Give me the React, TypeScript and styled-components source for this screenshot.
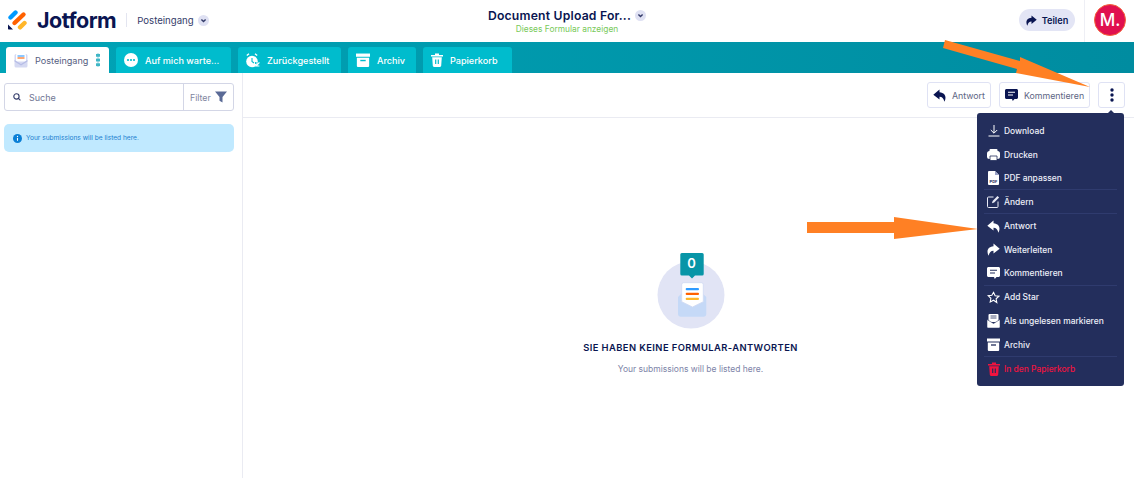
import React from 'react';
import styled, { createGlobalStyle } from 'styled-components';

const GlobalStyle = createGlobalStyle`
  html, body { margin: 0; padding: 0; background: #fff; }
  body { font-family: 'Inter', 'Liberation Sans', sans-serif; color: #0a1551; overflow: hidden; }
  * { box-sizing: border-box; }
`;

const Page = styled.div`
  position: relative;
  width: 1134px;
  height: 478px;
  display: flex;
  flex-direction: column;
  overflow: hidden;
`;

const Header = styled.header`
  height: 42px;
  display: grid;
  grid-template-columns: 1fr auto 1fr;
  align-items: center;
  padding: 0 8px 2px;
`;

const Brand = styled.div`
  display: flex;
  align-items: center;
`;

const Wordmark = styled.span`
  margin-left: 10px;
  font-size: 21.5px;
  font-weight: 700;
  letter-spacing: -0.5px;
  color: #0a1551;
`;

const BrandDivider = styled.span`
  width: 1px;
  height: 14px;
  margin: 0 10px 0 10px;
  background: #e3e5f0;
`;

const BrandSection = styled.span`
  font-size: 9.6px;
  color: #343c6a;
`;

const Chevron = styled.span`
  width: 11px;
  height: 11px;
  margin-left: 4px;
  border-radius: 50%;
  background: #dfe1f3;
  display: inline-flex;
  align-items: center;
  justify-content: center;
`;

const FormTitleBlock = styled.div`
  display: flex;
  flex-direction: column;
  align-items: center;
`;

const FormTitleRow = styled.div`
  display: flex;
  align-items: center;
`;

const FormTitle = styled.span`
  font-size: 12.2px;
  font-weight: 600;
  line-height: 18px;
  letter-spacing: 0.2px;
  color: #0a1551;
`;

const FormLink = styled.span`
  font-size: 8.4px;
  line-height: 9px;
  color: #78c95a;
`;

const HeaderRight = styled.div`
  display: flex;
  align-items: center;
  justify-content: flex-end;
`;

const ShareButton = styled.div`
  width: 56px;
  height: 22px;
  border-radius: 11px;
  background: #e3e5f5;
  display: flex;
  align-items: center;
  justify-content: center;
  gap: 5px;
  font-size: 9.2px;
  font-weight: 600;
  color: #0a1551;
`;

const HeaderDivider = styled.span`
  width: 1px;
  height: 42px;
  margin: 0 9px -2px 9px;
  background: #eeeff5;
`;

const Avatar = styled.div`
  width: 32px;
  height: 32px;
  border-radius: 50%;
  background: #e0104f;
  border: 1px solid #f5623a;
  color: #fff;
  font-size: 17px;
  font-weight: 500;
  display: flex;
  align-items: center;
  justify-content: center;
`;

const TabBar = styled.nav`
  height: 31px;
  padding: 5px 0 0 6px;
  display: flex;
  gap: 7px;
  background: linear-gradient(90deg, #00a4b7, #008ca0);
`;

const Tab = styled.div<{ $active?: boolean; $width: number }>`
  width: ${p => p.$width}px;
  height: 26px;
  padding-left: 8px;
  display: flex;
  align-items: center;
  gap: 7px;
  border-radius: 3px 3px 0 0;
  background: ${p => (p.$active ? '#fff' : '#00bccd')};
  color: ${p => (p.$active ? '#56607f' : '#fff')};
  font-size: 9.1px;
  font-weight: ${p => (p.$active ? 400 : 500)};
`;

const TabDots = styled.span`
  margin-left: auto;
  margin-right: 9px;
  width: 4px;
  height: 14px;
  background: radial-gradient(circle, #3fb6c6 1.8px, transparent 2px) 0 0 / 4px 4.7px;
`;

const Main = styled.main`
  flex: 1;
  display: flex;
  min-height: 0;
`;

const Sidebar = styled.aside`
  width: 243px;
  padding: 10px 8px 0 4px;
  border-right: 1px solid #eaebf2;
  display: flex;
  flex-direction: column;
  gap: 13px;
`;

const SearchBox = styled.div`
  height: 28px;
  display: flex;
  align-items: center;
  border: 1px solid #d3d6e6;
  border-radius: 3px;
`;

const SearchField = styled.div`
  flex: 1;
  height: 100%;
  padding-left: 8px;
  display: flex;
  align-items: center;
  gap: 8px;
  font-size: 9px;
  color: #6f7693;
`;

const FilterButton = styled.div`
  width: 50px;
  height: 100%;
  border-left: 1px solid #d3d6e6;
  padding-left: 6px;
  display: flex;
  align-items: center;
  gap: 4px;
  font-size: 8.8px;
  color: #7f86a0;
`;

const InfoBanner = styled.div`
  height: 28px;
  padding-left: 9px;
  display: flex;
  align-items: center;
  gap: 4px;
  border-radius: 5px;
  background: #c0e9ff;
  color: #1b7fd0;
  font-size: 6.6px;
`;

const Content = styled.section`
  flex: 1;
  display: flex;
  flex-direction: column;
`;

const Toolbar = styled.div`
  height: 45px;
  padding: 9px 9px 0 0;
  display: flex;
  justify-content: flex-end;
  gap: 8px;
  border-bottom: 1px solid #eaebf2;
`;

const ToolButton = styled.div<{ $width: number }>`
  width: ${p => p.$width}px;
  height: 26px;
  border: 1px solid #dfe2f4;
  border-radius: 3px;
  display: flex;
  align-items: center;
  justify-content: center;
  gap: 6px;
  font-size: 8.8px;
  color: #5d6584;
`;

const EmptyState = styled.div`
  flex: 1;
  display: flex;
  flex-direction: column;
  align-items: center;
  padding: 135px 0 0 4px;
`;

const IllustrationWrap = styled.div`
  position: relative;
  width: 68px;
  height: 76px;
`;

const BadgeZero = styled.span`
  position: absolute;
  left: 23px;
  width: 24px;
  top: 2px;
  text-align: center;
  font-size: 13px;
  line-height: 17px;
  font-weight: 600;
  color: #fff;
`;

const EmptyTitle = styled.h2`
  margin: 12px 0 0;
  font-size: 9.4px;
  line-height: 14px;
  font-weight: 600;
  letter-spacing: 0.42px;
  color: #0a1551;
`;

const EmptyText = styled.p`
  margin: 8px 0 0;
  font-size: 8.5px;
  line-height: 12px;
  color: #7d84a8;
`;

const Menu = styled.div`
  position: absolute;
  left: 977px;
  top: 113px;
  width: 147px;
  height: 273px;
  padding: 6px 7px 0 7px;
  background: #232e5c;
  border-radius: 3px;
  display: flex;
  flex-direction: column;
  &::before {
    content: '';
    position: absolute;
    top: -3px;
    right: 9px;
    border: 4px solid transparent;
    border-top: 0;
    border-bottom-color: #232e5c;
  }
`;

const MenuRow = styled.div<{ $danger?: boolean; $divider?: boolean }>`
  height: 23.8px;
  flex: none;
  padding-left: 3px;
  display: flex;
  align-items: center;
  gap: 4px;
  font-size: 8.45px;
  font-weight: 500;
  color: ${p => (p.$danger ? '#f0133f' : '#eef0f9')};
  border-bottom: ${p => (p.$divider ? '1px solid #2f3b6e' : '0 none')};
`;

const MenuIcon = styled.span`
  width: 13px;
  height: 14px;
  display: flex;
  align-items: center;
  justify-content: center;
`;

const ArrowLayer = styled.svg`
  position: absolute;
  left: 0;
  top: 0;
  pointer-events: none;
`;

const ChevronIcon = () => (
  <svg width="7" height="7" viewBox="0 0 10 10" fill="none" stroke="#343c6a" strokeWidth="2">
    <path d="M2 3.500l3 3 3-3" />
  </svg>
);

const LogoIcon = () => (
  <svg width="19" height="20" viewBox="0 0 19 20" fill="none" strokeWidth="4.400" strokeLinecap="round">
    <path d="M2.500 7.500L7.500 2.500" stroke="#0099ff" />
    <path d="M6.500 13L15.500 4.500" stroke="#ff6100" />
    <path d="M12 17.300L16.500 13" stroke="#ffb629" />
    <path d="M0 14.500v4.300c0 .4.200.7.700.7H5z" fill="#0a1551" stroke="none" />
  </svg>
);

const ReplyIcon = ({ color }: { color: string }) => (
  <svg width="13" height="13" viewBox="0 0 12 12" fill={color}>
    <path d="M6 .5L.3 5.200 6 9.800V7.200c2.500 0 3.700 1.500 4.500 4.500 2-3.500 1.400-8.200-4.500-8.700z" />
  </svg>
);

const ForwardIcon = ({ color, size = 13 }: { color: string; size?: number }) => (
  <svg width={size} height={size} viewBox="0 0 12 12" fill={color}>
    <path d="M6 .5l5.700 4.700L6 9.800V7.200c-2.500 0-3.700 1.500-4.500 4.500C-.5 8.200.1 3.500 6 3z" />
  </svg>
);

const CommentIcon = ({ color, line }: { color: string; line: string }) => (
  <svg width="13" height="12" viewBox="0 0 13 12">
    <path d="M1.500 0h10c.8 0 1.500.7 1.500 1.500v7c0 .8-.7 1.500-1.500 1.500H9.500L7.800 12 7 10H1.500C.7 10 0 9.300 0 8.500v-7C0 .7.700 0 1.500 0z" fill={color} />
    <path d="M3 3.200h7M3 6h5" stroke={line} strokeWidth="1.100" />
  </svg>
);

const ArchiveIcon = ({ color, bg, size = 13 }: { color: string; bg: string; size?: number }) => (
  <svg width={size} height={size} viewBox="0 0 13 13">
    <path d="M0 .5h13v3H0z" fill={color} />
    <path d="M.8 4.500h11.400V12a1 1 0 0 1-1 1H1.800a1 1 0 0 1-1-1z" fill={color} />
    <path d="M4 7h5" stroke={bg} strokeWidth="1.300" />
  </svg>
);

const TrashIcon = ({ color, bg }: { color: string; bg: string }) => (
  <svg width="12" height="14" viewBox="0 0 12 14">
    <path d="M0 2h12v1.400H0zM4 .5h4V2H4z" fill={color} />
    <path d="M1.200 4.200h9.600l-.6 8.600a1.200 1.200 0 0 1-1.200 1.100H3a1.200 1.200 0 0 1-1.200-1.100z" fill={color} />
    <path d="M4.700 6.500v4.500M7.300 6.500v4.500" stroke={bg} strokeWidth="1.200" />
  </svg>
);

const InboxIcon = () => (
  <svg width="14" height="15" viewBox="0 0 14 15">
    <rect x="0.500" y="1" width="13" height="13.500" rx="1.500" fill="#d5d9f2" />
    <rect x="2" y="1" width="10" height="7.500" rx="1" fill="#fff" />
    <path d="M3.500 3h7" stroke="#2f9bff" strokeWidth="1.100" />
    <path d="M3.500 5h7" stroke="#ff6100" strokeWidth="1.100" />
    <path d="M0.500 7l6.500 4 6.500-4v1.500L7 12.500.5 8.500z" fill="#b7bde6" />
  </svg>
);

const WaitingIcon = () => (
  <svg width="14" height="14" viewBox="0 0 14 14">
    <circle cx="7" cy="7" r="7" fill="#fff" />
    <circle cx="4" cy="7" r="1.100" fill="#00bccd" />
    <circle cx="7" cy="7" r="1.100" fill="#00bccd" />
    <circle cx="10" cy="7" r="1.100" fill="#00bccd" />
  </svg>
);

const SnoozeIcon = () => (
  <svg width="14" height="15" viewBox="0 0 14 15">
    <circle cx="6" cy="8.500" r="5.800" fill="#fff" />
    <path d="M.8 2.500L3 .8M9 .8l2.200 1.700" stroke="#fff" strokeWidth="1.400" />
    <path d="M6 5v3.500l2 1.500" stroke="#00bccd" strokeWidth="1.100" fill="none" />
    <path d="M9 9h4.500v1.500l-3 2.500h3V15H9v-1.500l3-2.500H9z" fill="#00bccd" />
    <path d="M9.800 10h3.200l-3 3h3.400" stroke="#fff" strokeWidth="1.100" fill="none" />
  </svg>
);

const SearchIcon = () => (
  <svg width="8" height="8" viewBox="0 0 10 10" fill="none" stroke="#343c6a" strokeWidth="1.400">
    <circle cx="4.300" cy="4.300" r="3.300" />
    <path d="M6.800 6.800L9.300 9.300" />
  </svg>
);

const FilterIcon = () => (
  <svg width="12" height="12" viewBox="0 0 12 12" fill="#5a6a96">
    <path d="M0 .5h12L7.500 6v5.500l-3-1.800V6z" />
  </svg>
);

const InfoIcon = () => (
  <svg width="9" height="9" viewBox="0 0 10 10">
    <circle cx="5" cy="5" r="5" fill="#0a7fd6" />
    <path d="M5 4.300v3.200" stroke="#fff" strokeWidth="1.200" />
    <circle cx="5" cy="2.700" r="0.700" fill="#fff" />
  </svg>
);

const KebabIcon = () => (
  <svg width="4" height="14" viewBox="0 0 4 14" fill="#0a1551">
    <circle cx="2" cy="2" r="1.700" />
    <circle cx="2" cy="7" r="1.700" />
    <circle cx="2" cy="12" r="1.700" />
  </svg>
);

const DownloadIcon = () => (
  <svg width="12" height="12" viewBox="0 0 12 12" fill="none" stroke="#fff" strokeWidth="1">
    <path d="M6 0v8M2.800 5L6 8.200 9.200 5M.5 11h11" />
  </svg>
);

const PrintIcon = () => (
  <svg width="13" height="12" viewBox="0 0 13 12">
    <rect x="2.500" y="0" width="8" height="3" rx="1" fill="#fff" />
    <rect x="0" y="2" width="13" height="8" rx="2.500" fill="#fff" />
    <path d="M3 7h7v4.500H3z" fill="#fff" stroke="#232e5c" strokeWidth="0.800" />
  </svg>
);

const PdfIcon = () => (
  <svg width="11" height="14" viewBox="0 0 11 14">
    <path d="M1 0h6l4 4v9a1 1 0 0 1-1 1H1a1 1 0 0 1-1-1V1a1 1 0 0 1 1-1z" fill="#fff" />
    <path d="M7 0v4h4" fill="#9aa2c8" />
    <text x="5.500" y="11.500" textAnchor="middle" fontSize="4" fontWeight="700" fill="#232e5c">PDF</text>
  </svg>
);

const EditIcon = () => (
  <svg width="13" height="13" viewBox="0 0 13 13" fill="none" stroke="#e9ebf6" strokeWidth="1">
    <path d="M6.500 2H1.500a1 1 0 0 0-1 1v8.500a1 1 0 0 0 1 1H10a1 1 0 0 0 1-1V6.500" />
    <path d="M5 8.200l.6-2.200L10.500 1l1.600 1.600L7.200 7.600z" fill="#e9ebf6" stroke="none" />
  </svg>
);

const StarIcon = () => (
  <svg width="13" height="13" viewBox="0 0 24 24" fill="none" stroke="#fff" strokeWidth="2">
    <path d="M12 2.500l3 6.300 6.800.9-5 4.700 1.300 6.800L12 17l-6.100 3.200 1.300-6.800-5-4.700 6.800-.9z" />
  </svg>
);

const UnreadIcon = () => (
  <svg width="13" height="14" viewBox="0 0 13 14">
    <rect x="1.500" y="0" width="10" height="8" rx="1" fill="#fff" />
    <path d="M3.500 2h6M3.500 4h6" stroke="#232e5c" strokeWidth="0.800" />
    <path d="M0 5.500l6.500 4 6.500-4V13a1 1 0 0 1-1 1H1a1 1 0 0 1-1-1z" fill="#fff" stroke="#232e5c" strokeWidth="0.500" />
  </svg>
);

const EmptyIllustration = () => (
  <svg width="68" height="76" viewBox="0 0 68 76">
    <circle cx="34" cy="42" r="33.500" fill="#e1e4f5" />
    <path d="M21 44l4-4h20l4.300 4v16.700a3 3 0 0 1-3 3H24a3 3 0 0 1-3-3z" fill="#c5d9f7" />
    <path d="M26.700 29.700h17.600a2 2 0 0 1 2 2v17L35.500 54l-10.800-5.300v-17a2 2 0 0 1 2-2z" fill="#fff" stroke="#cfd9f2" strokeWidth="0.800" />
    <rect x="28.700" y="35" width="13.300" height="2.200" rx="1" fill="#2f9bff" />
    <rect x="28.700" y="39.700" width="13.300" height="2.200" rx="1" fill="#ff6100" />
    <rect x="28.700" y="44.700" width="13.300" height="2.200" rx="1" fill="#ffb629" />
    <path d="M24.800 0h20.400a1.500 1.500 0 0 1 1.500 1.500v19.500a1.500 1.500 0 0 1-1.500 1.500h-7.200L35 25.500l-3-3h-7.200a1.500 1.500 0 0 1-1.500-1.500V1.500A1.500 1.500 0 0 1 24.800 0z" fill="#0795a7" />
  </svg>
);

const menuItems: { label: string; icon: React.ReactNode; divider?: boolean; danger?: boolean }[] = [
  { label: 'Download', icon: <DownloadIcon /> },
  { label: 'Drucken', icon: <PrintIcon /> },
  { label: 'PDF anpassen', icon: <PdfIcon />, divider: true },
  { label: 'Ändern', icon: <EditIcon />, divider: true },
  { label: 'Antwort', icon: <ReplyIcon color="#fff" /> },
  { label: 'Weiterleiten', icon: <ForwardIcon color="#fff" /> },
  { label: 'Kommentieren', icon: <CommentIcon color="#fff" line="#232e5c" />, divider: true },
  { label: 'Add Star', icon: <StarIcon /> },
  { label: 'Als ungelesen markieren', icon: <UnreadIcon /> },
  { label: 'Archiv', icon: <ArchiveIcon color="#fff" bg="#232e5c" />, divider: true },
  { label: 'In den Papierkorb', icon: <TrashIcon color="#f0133f" bg="#232e5c" />, danger: true },
];

export default function App() {
  return (
    <Page>
      <GlobalStyle />
      <Header>
        <Brand>
          <LogoIcon />
          <Wordmark>Jotform</Wordmark>
          <BrandDivider />
          <BrandSection>Posteingang</BrandSection>
          <Chevron>
            <ChevronIcon />
          </Chevron>
        </Brand>
        <FormTitleBlock>
          <FormTitleRow>
            <FormTitle>Document Upload For...</FormTitle>
            <Chevron>
              <ChevronIcon />
            </Chevron>
          </FormTitleRow>
          <FormLink>Dieses Formular anzeigen</FormLink>
        </FormTitleBlock>
        <HeaderRight>
          <ShareButton>
            <ForwardIcon color="#0a1551" size={11} />
            Teilen
          </ShareButton>
          <HeaderDivider />
          <Avatar>M.</Avatar>
        </HeaderRight>
      </Header>

      <TabBar>
        <Tab $active $width={103}>
          <InboxIcon />
          Posteingang
          <TabDots />
        </Tab>
        <Tab $width={115}>
          <WaitingIcon />
          Auf mich warte...
        </Tab>
        <Tab $width={103}>
          <SnoozeIcon />
          Zurückgestellt
        </Tab>
        <Tab $width={68}>
          <ArchiveIcon color="#fff" bg="#00bccd" size={14} />
          Archiv
        </Tab>
        <Tab $width={89}>
          <TrashIcon color="#fff" bg="#00bccd" />
          Papierkorb
        </Tab>
      </TabBar>

      <Main>
        <Sidebar>
          <SearchBox>
            <SearchField>
              <SearchIcon />
              Suche
            </SearchField>
            <FilterButton>
              Filter
              <FilterIcon />
            </FilterButton>
          </SearchBox>
          <InfoBanner>
            <InfoIcon />
            Your submissions will be listed here.
          </InfoBanner>
        </Sidebar>
        <Content>
          <Toolbar>
            <ToolButton $width={64}>
              <ReplyIcon color="#0a1551" />
              Antwort
            </ToolButton>
            <ToolButton $width={91}>
              <CommentIcon color="#0a1551" line="#fff" />
              Kommentieren
            </ToolButton>
            <ToolButton $width={27}>
              <KebabIcon />
            </ToolButton>
          </Toolbar>
          <EmptyState>
            <IllustrationWrap>
              <EmptyIllustration />
              <BadgeZero>0</BadgeZero>
            </IllustrationWrap>
            <EmptyTitle>SIE HABEN KEINE FORMULAR-ANTWORTEN</EmptyTitle>
            <EmptyText>Your submissions will be listed here.</EmptyText>
          </EmptyState>
        </Content>
      </Main>

      <Menu>
        {menuItems.map(item => (
          <MenuRow key={item.label} $divider={item.divider} $danger={item.danger}>
            <MenuIcon>{item.icon}</MenuIcon>
            {item.label}
          </MenuRow>
        ))}
      </Menu>

      <ArrowLayer width="1134" height="478" viewBox="0 0 1134 478">
        <path d="M945 40L1020 61 1020 57 1090 87 1016 73 1017 69 943 48z" fill="#ff8024" />
        <path d="M807 222H894V217L978 229 894 239V233H807z" fill="#ff8024" />
      </ArrowLayer>
    </Page>
  );
}
